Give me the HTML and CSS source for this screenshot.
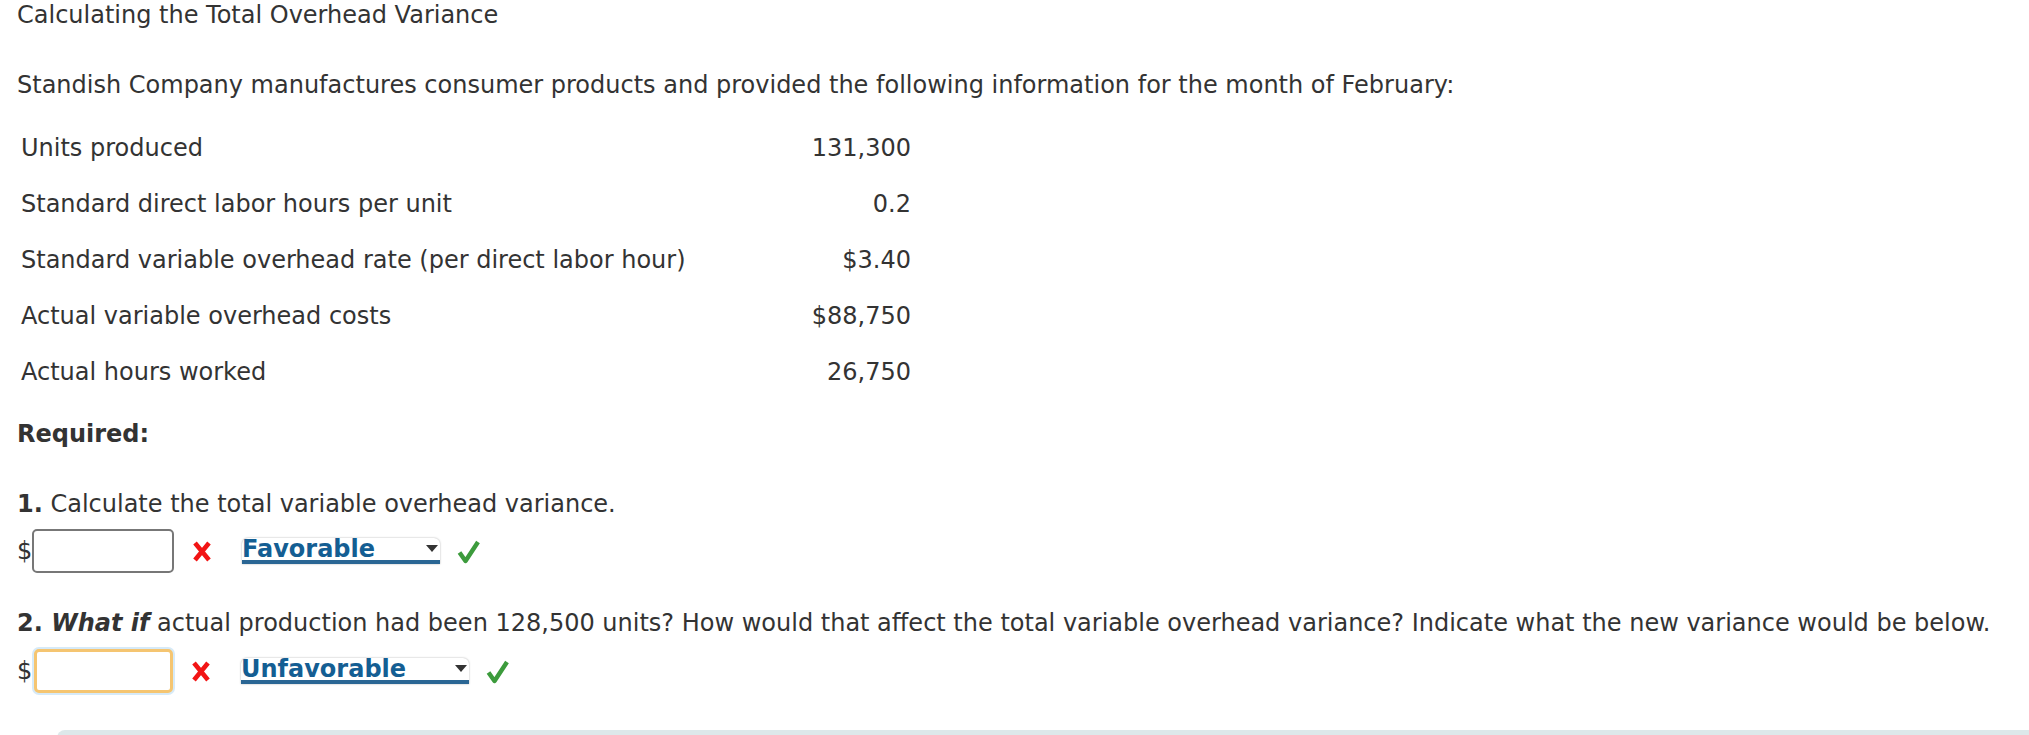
FILE: index.html
```html
<!DOCTYPE html>
<html>
<head>
<meta charset="utf-8">
<link rel="stylesheet" href="styles.css">
</head>
<body>
<div class="page">
  <h1 class="title">Calculating the Total Overhead Variance</h1>
  <p class="intro">Standish Company manufactures consumer products and provided the following information for the month of February:</p>
  <div class="data">
    <div class="row"><span class="label">Units produced</span><span class="value">131,300</span></div>
    <div class="row"><span class="label">Standard direct labor hours per unit</span><span class="value">0.2</span></div>
    <div class="row"><span class="label">Standard variable overhead rate (per direct labor hour)</span><span class="value">$3.40</span></div>
    <div class="row"><span class="label">Actual variable overhead costs</span><span class="value">$88,750</span></div>
    <div class="row"><span class="label">Actual hours worked</span><span class="value">26,750</span></div>
  </div>
  <p class="req">Required:</p>
  <p class="q q1"><b>1.</b> Calculate the total variable overhead variance.</p>
  <div class="answer">
    <span class="dollar">$</span>
    <span class="box"></span>
    <svg class="wrong" width="20" height="21" viewBox="0 0 20 21"><path d="M3 2 L17 19 M17 2 L3 19" stroke="#f21414" stroke-width="4.6" fill="none"/></svg>
    <span class="sel sel1"><span class="seltext">Favorable</span><svg class="caret" width="12" height="8" viewBox="0 0 12 8"><path d="M0 0 H12 L6 7 Z" fill="#333"/></svg></span>
    <svg class="right" width="23" height="25" viewBox="0 0 23 25"><path d="M2.5 13.5 L8.5 22 L21 3" stroke="#3c9b3c" stroke-width="4.4" fill="none" stroke-linejoin="round"/></svg>
  </div>
  <p class="q q2"><b>2. <i>What if</i></b> actual production had been 128,500 units? How would that affect the total variable overhead variance? Indicate what the new variance would be below.</p>
  <div class="answer answer2">
    <span class="dollar">$</span>
    <span class="box box-focus"></span>
    <svg class="wrong" width="20" height="21" viewBox="0 0 20 21"><path d="M3 2 L17 19 M17 2 L3 19" stroke="#f21414" stroke-width="4.6" fill="none"/></svg>
    <span class="sel sel2"><span class="seltext">Unfavorable</span><svg class="caret" width="12" height="8" viewBox="0 0 12 8"><path d="M0 0 H12 L6 7 Z" fill="#333"/></svg></span>
    <svg class="right" width="23" height="25" viewBox="0 0 23 25"><path d="M2.5 13.5 L8.5 22 L21 3" stroke="#3c9b3c" stroke-width="4.4" fill="none" stroke-linejoin="round"/></svg>
  </div>
  <div class="panel"></div>
</div>
</body>
</html>
```
FILE: styles.css
```css
html, body {
  margin: 0;
  padding: 0;
  background: #fff;
}
.page {
  font-family: "DejaVu Sans", Verdana, sans-serif;
  font-size: 24px;
  color: #333;
  padding-left: 17px;
  padding-top: 2px;
  overflow: hidden;
  height: 735px;
  box-sizing: border-box;
}
.title {
  font-size: 24px;
  font-weight: normal;
  line-height: 26px;
  margin: 0;
}
.intro {
  margin: 44px 0 0 0;
  line-height: 26px;
}
.data {
  margin: 22px 0 0 4px;
  width: 890px;
}
.row {
  display: flex;
  justify-content: space-between;
  align-items: center;
  height: 56px;
}
.req {
  margin: 21px 0 0 0;
  line-height: 26px;
  font-weight: bold;
}
.q {
  margin: 44px 0 0 0;
  line-height: 26px;
}
.q2 {
  margin-top: 37px;
}
.answer {
  display: flex;
  align-items: center;
  margin-top: 12px;
  height: 44px;
}
.answer2 {
  margin-top: 13px;
}
.dollar {
  width: 15px;
}
.box {
  width: 142px;
  height: 44px;
  box-sizing: border-box;
  border: 2px solid #777;
  border-radius: 5px;
  background: #fff;
}
.box-focus {
  border: 3px solid #f5c571;
  box-shadow: 0 0 0 2px #d6eaf8;
  margin-left: 2px;
  width: 139px;
}
.wrong {
  margin-left: 18px;
}
.sel {
  margin-left: 30px;
  height: 26px;
  box-sizing: border-box;
  display: flex;
  align-items: center;
  justify-content: space-between;
  background: #fff;
  border-radius: 6px 6px 0 0;
  border-bottom: 4px solid #2a6694;
  box-shadow: 0 0 2px rgba(0,0,0,0.35);
  padding-right: 2px;
}
.sel1 { width: 198px; }
.sel2 { width: 228px; }
.seltext {
  font-weight: bold;
  color: #145e93;
  line-height: 22px;
}
.right {
  margin-left: 17px;
}
.panel {
  margin: 37px 0 0 40px;
  height: 20px;
  background: #dde8ea;
  border-radius: 8px 0 0 0;
  margin-right: -20px;
}
```
